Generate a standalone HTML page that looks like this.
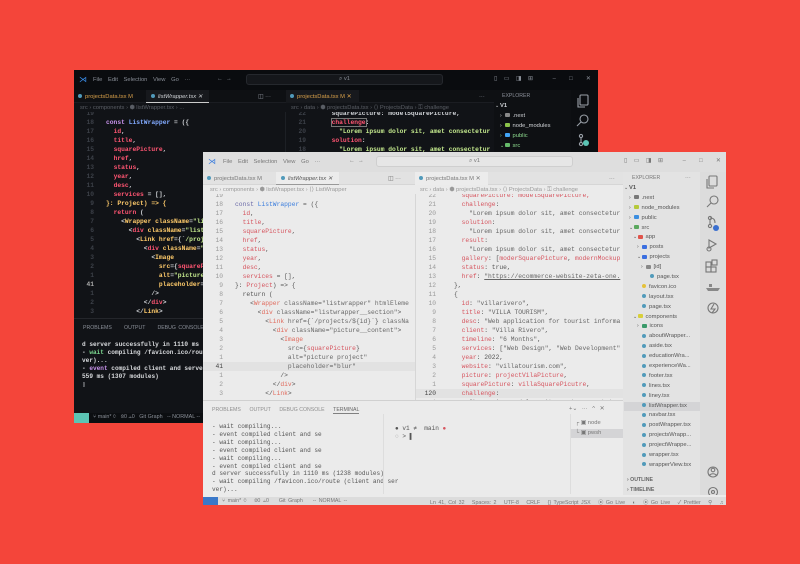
<!DOCTYPE html>
<html><head><meta charset="utf-8"><style>
*{box-sizing:border-box;margin:0;padding:0}
body{width:800px;height:564px;background:#f4453a;position:relative;overflow:hidden;font-family:"Liberation Sans",sans-serif}
.win{position:absolute;width:524px;height:353px;overflow:hidden}
.win>div{position:absolute}
pre{font-family:"Liberation Mono",monospace;font-size:6.3px;line-height:9px;white-space:pre;position:absolute}
.ui{font-size:5.8px;white-space:nowrap}
.t{position:absolute;white-space:nowrap}
.light{background:#ebebeb;color:#555}
.light .title{background:#dedede}
.light .tabs{background:#e2e2e2;border-bottom:1px solid #d6d6d6}
.light .atab{background:#ececec}
.light .side{background:#e3e3e3}
.light .act{background:#dcdcdc}
.light .panel{background:#ebebeb;border-top:1px solid #d0d0d0}
.light .status{background:#dcdcdc;color:#666}
.light .srch{background:#e6e6e6;border:1px solid #cfcfcf}
.light .ln{color:#9a9a9a}
.light .k{color:#6b6aa8}.light .f{color:#3b7ddd}.light .p{color:#d6555f}.light .s{color:#666}.light .tg{color:#e06a5c}.light .a{color:#6a6a6a}.light .y{color:#d6555f}.light .o{color:#555}
.light .sel{background:#d4d4d6}
.light .cur{background:#e2e2e2}
.light .rem{background:#3a78c9}
.light .dim{color:#777}
.light .ico{stroke:#777}
.dark{background:#111317;color:#cfd2d6}
.dark .title{background:#0a0c0f}
.dark .tabs{background:#0e1013;border-bottom:1px solid #1b1d22}
.dark .atab{background:#17191d}
.dark .side{background:#0e1013}
.dark .act{background:#0c0e11}
.dark .panel{background:#111317;border-top:1px solid #24262b}
.dark .status{background:#0c0e11;color:#8a8f98}
.dark .srch{background:#15171b;border:1px solid #25282d}
.dark .ln{color:#3c4048}
.dark .k{color:#c792ea}.dark .f{color:#82aaff}.dark .p{color:#ff5572}.dark .s{color:#c3e88d}.dark .tg{color:#ff5572}.dark .a{color:#ffcb6b}.dark .y{color:#ffcb6b}.dark .o{color:#cfd2d6}
.dark .sel{background:#1e2228}
.dark .cur{background:#16181c}
.dark .rem{background:#5cc4b4}
.dark .dim{color:#8a8f98}
.dark .ico{stroke:#9aa0a8}
.dark pre{font-weight:bold}
.exp div{height:9.9px;line-height:9.9px;font-size:5.8px;white-space:nowrap;position:relative}
.ic{display:inline-block;width:4.5px;height:4px;border-radius:1px;margin-right:3px;vertical-align:middle}
.fi{display:inline-block;width:4px;height:4px;border-radius:50%;background:#519aba;margin-right:3px;vertical-align:middle}
.ch{display:inline-block;width:5px;font-size:5px}
</style></head><body>

<!-- DARK WINDOW -->
<div class="win dark" style="left:74px;top:70px">
 <div class="title" style="left:0;top:0;width:524px;height:20px"></div>
 <div class="t ui" style="left:5px;top:5px;color:#3b8eea;font-size:8px">⋊</div>
 <div class="t ui dim" style="left:19px;top:7px;word-spacing:4px">File Edit Selection View Go ···</div>
 <div class="t ui dim" style="left:143px;top:6px">←&nbsp;&nbsp;→</div>
 <div class="srch" style="left:172px;top:4px;width:197px;height:11px;border-radius:3px"></div>
 <div class="t ui dim" style="left:265px;top:6px">⌕ v1</div>
 <div class="t ui dim" style="left:420px;top:6px;word-spacing:5px">▯ ▭ ◨ ⊞ &nbsp; – &nbsp;□ &nbsp;✕</div>
 <div class="tabs" style="left:0;top:20px;width:420px;height:13px"></div>
 <div class="t ui" style="left:4px;top:24px;color:#d8a04a"><span class="fi"></span>projectsData.tsx M</div>
 <div class="atab" style="left:72px;top:20px;width:63px;height:13px;border-bottom:1px solid #ccc"></div>
 <div class="t ui" style="left:77px;top:24px;font-style:italic"><span class="fi"></span>listWrapper.tsx ✕</div>
 <div class="t ui dim" style="left:184px;top:24px">◫ ···</div>
 <div class="atab" style="left:212px;top:20px;width:73px;height:13px"></div>
 <div class="t ui" style="left:216px;top:24px;color:#d8a04a"><span class="fi"></span>projectsData.tsx M ✕</div>
 <div class="t ui dim" style="left:405px;top:24px">···</div>
 <div class="t ui dim" style="left:6px;top:35px;opacity:.6">src › components › ⬢ listWrapper.tsx › ...</div>
 <div class="t ui dim" style="left:217px;top:35px;opacity:.6">src › data › ⬢ projectsData.tsx › ⟨⟩ ProjectsData › ⚿ challenge</div>
 <div style="left:0;top:42px;width:211px;height:206px;overflow:hidden">
  <pre class="ln" style="left:0;top:-3px;width:20px;text-align:right">19
18
17
16
15
14
13
12
11
10
9
8
7
6
5
4
3
2
1
<span style="color:#aaa">41</span>
1
2
3</pre>
  <pre style="left:32px;top:-3px"> 
<span class="k">const</span> <span class="f">ListWrapper</span> <span class="o">= ({</span>
  <span class="p">id</span>,
  <span class="p">title</span>,
  <span class="p">squarePicture</span>,
  <span class="p">href</span>,
  <span class="p">status</span>,
  <span class="p">year</span>,
  <span class="p">desc</span>,
  <span class="p">services</span> = [],
<span class="y">}: Project) =&gt; {</span>
  <span class="p">return</span> (
    &lt;<span class="y">Wrapper</span> <span class="a">className</span>=<span class="s">"listwrapper"</span> <span class="a">htmlEleme</span>
      &lt;<span class="tg">div</span> <span class="a">className</span>=<span class="s">"listwrapper__section"</span>&gt;
        &lt;<span class="y">Link</span> <span class="a">href</span>={`<span class="s">/projects/${id}</span>`} <span class="a">classNa</span>
          &lt;<span class="tg">div</span> <span class="a">className</span>=<span class="s">"picture__content"</span>&gt;
            &lt;<span class="y">Image</span>
              <span class="a">src</span>={<span class="p">squarePicture</span>}
              <span class="a">alt</span>=<span class="s">"picture project"</span>
              <span class="a">placeholder</span>=<span class="s">"blur"</span>
            /&gt;
          &lt;/<span class="tg">div</span>&gt;
        &lt;/<span class="y">Link</span>&gt;</pre>
 </div>
 <div style="left:211px;top:42px;width:209px;height:206px;overflow:hidden;border-left:1px solid #1d2025">
  <pre class="ln" style="left:0;top:-3px;width:20px;text-align:right">22
21
20
19
18</pre>
  <pre style="left:38px;top:-3px">  <span class="o">squarePicture: modelSquarePicture,</span>
  <span class="p" style="outline:1px solid #777">challenge</span>:
    <span class="s">"Lorem ipsum dolor sit, amet consectetur</span>
  <span class="p">solution</span>:
    <span class="s">"Lorem ipsum dolor sit, amet consectetur</span></pre>
 </div>
 <div class="side" style="left:420px;top:20px;width:77px;height:322px"></div>
 <div class="t ui dim" style="left:428px;top:23px;font-size:5.2px">EXPLORER</div>
 <div class="exp" style="left:421px;top:32px;width:76px">
  <div><span class="ch">⌄</span><b>V1</b></div>
  <div style="padding-left:5px"><span class="ch">›</span><span class="ic" style="background:#888"></span>.next</div>
  <div style="padding-left:5px"><span class="ch">›</span><span class="ic" style="background:#8bc34a"></span>node_modules</div>
  <div style="padding-left:5px;color:#8ddc8f"><span class="ch">›</span><span class="ic" style="background:#42a5f5"></span>public</div>
  <div style="padding-left:5px;color:#8ddc8f"><span class="ch">⌄</span><span class="ic" style="background:#66bb6a"></span>src</div>
 </div>
 <div class="act" style="left:497px;top:20px;width:27px;height:322px"></div>
 <svg style="position:absolute;left:497px;top:20px" width="27" height="80" fill="none" stroke-width="1.1" class="ico"><rect x="9" y="5" width="8" height="10" rx="1"/><path d="M7 8v9h7"/><circle cx="13" cy="29" r="4"/><path d="M10 32l-4 4"/><circle cx="10" cy="46" r="1.6"/><circle cx="10" cy="54" r="1.6"/><path d="M10 48v4"/><circle cx="15" cy="53" r="3" fill="#5cc4b4" stroke="none"/></svg>
 <div class="panel" style="left:0;top:248px;width:420px;height:95px"></div>
 <div class="t ui dim" style="left:9px;top:255px;font-size:5.2px;word-spacing:1px">PROBLEMS &nbsp;&nbsp;&nbsp; OUTPUT &nbsp;&nbsp;&nbsp; DEBUG CONSOLE &nbsp;&nbsp;&nbsp; <span style="color:#ddd">TERMINAL</span></div>
 <pre style="left:8px;top:271px;line-height:7.9px;font-size:6.1px;color:#d8dadd">d server successfully in 1110 ms (1238 modules)
- <span style="color:#7bd88f">wait</span> compiling /favicon.ico/route (client and ser
ver)...
- <span style="color:#c792ea">event</span> compiled client and server successfully in
559 ms (1307 modules)
▯</pre>
 <div class="status" style="left:0;top:343px;width:524px;height:10px"></div>
 <div class="rem" style="left:0;top:343px;width:15px;height:10px"></div>
 <div class="t ui dim" style="left:19px;top:344px;font-size:5.4px">⑂ main* ⟳ &nbsp; ⊗0 ⚠0 &nbsp; Git Graph &nbsp; -- NORMAL --</div>
</div>

<!-- LIGHT WINDOW -->
<div class="win light" style="left:203px;top:152px;width:523px">
 <div class="title" style="left:0;top:0;width:524px;height:20px"></div>
 <div class="t ui" style="left:5px;top:5px;color:#3b7ddd;font-size:8px">⋊</div>
 <div class="t ui dim" style="left:20px;top:7px;word-spacing:4px">File Edit Selection View Go ···</div>
 <div class="t ui dim" style="left:146px;top:6px">←&nbsp;&nbsp;→</div>
 <div class="srch" style="left:173px;top:4px;width:197px;height:11px;border-radius:3px"></div>
 <div class="t ui dim" style="left:266px;top:6px">⌕ v1</div>
 <div class="t ui dim" style="left:421px;top:6px;word-spacing:5px">▯ ▭ ◨ ⊞ &nbsp; – &nbsp;□ &nbsp;✕</div>
 <div class="tabs" style="left:0;top:20px;width:420px;height:13px"></div>
 <div class="t ui dim" style="left:4px;top:24px"><span class="fi"></span>projectsData.tsx M</div>
 <div class="atab" style="left:73px;top:20px;width:63px;height:13px;border-bottom:1px solid #999"></div>
 <div class="t ui" style="left:78px;top:24px;font-style:italic"><span class="fi"></span>listWrapper.tsx ✕</div>
 <div class="t ui dim" style="left:185px;top:24px">◫ ···</div>
 <div class="atab" style="left:212px;top:20px;width:73px;height:13px"></div>
 <div class="t ui dim" style="left:216px;top:24px"><span class="fi"></span>projectsData.tsx M ✕</div>
 <div class="t ui dim" style="left:406px;top:24px">···</div>
 <div class="t ui dim" style="left:7px;top:35px;opacity:.7">src › components › ⬢ listWrapper.tsx › ⟨⟩ ListWrapper</div>
 <div class="t ui dim" style="left:217px;top:35px;opacity:.7">src › data › ⬢ projectsData.tsx › ⟨⟩ ProjectsData › ⚿ challenge</div>
 <div style="left:0;top:42px;width:212px;height:206px;overflow:hidden">
  <div class="cur" style="position:absolute;left:0;top:168px;width:212px;height:9px"></div>
  <pre class="ln" style="left:0;top:-3px;width:20px;text-align:right">19
18
17
16
15
14
13
12
11
10
9
8
7
6
5
4
3
2
1
<span style="color:#444">41</span>
1
2
3</pre>
  <pre style="left:32px;top:-3px"> 
<span class="k">const</span> <span class="f">ListWrapper</span> <span class="o">= ({</span>
  <span class="p">id</span>,
  <span class="p">title</span>,
  <span class="p">squarePicture</span>,
  <span class="p">href</span>,
  <span class="p">status</span>,
  <span class="p">year</span>,
  <span class="p">desc</span>,
  <span class="p">services</span> = [],
}: <span class="y">Project</span>) =&gt; {
  <span class="o">return</span> (
    &lt;<span class="tg">Wrapper</span> <span class="a">className</span>=<span class="s">"listwrapper"</span> <span class="a">htmlEleme</span>
      &lt;<span class="tg">div</span> <span class="a">className</span>=<span class="s">"listwrapper__section"</span>&gt;
        &lt;<span class="tg">Link</span> <span class="a">href</span>={`<span class="s">/projects/${id}</span>`} <span class="a">classNa</span>
          &lt;<span class="tg">div</span> <span class="a">className</span>=<span class="s">"picture__content"</span>&gt;
            &lt;<span class="tg">Image</span>
              <span class="a">src</span>={<span class="p">squarePicture</span>}
              <span class="a">alt</span>=<span class="s">"picture project"</span>
              <span class="a">placeholder</span>=<span class="s">"blur"</span>
            /&gt;
          &lt;/<span class="tg">div</span>&gt;
        &lt;/<span class="tg">Link</span>&gt;</pre>
 </div>
 <div style="left:212px;top:42px;width:208px;height:206px;overflow:hidden;border-left:1px solid #d6d6d6">
  <div class="cur" style="position:absolute;left:0;top:195px;width:208px;height:9px"></div>
  <pre class="ln" style="left:0;top:-3px;width:20px;text-align:right">22
21
20
19
18
17
16
15
14
13
12
11
10
9
8
7
6
5
4
3
2
1
<span style="color:#444">120</span>
1</pre>
  <pre style="left:38px;top:-3px">  <span class="p">squarePicture: modelSquarePicture,</span>
  <span class="p">challenge</span>:
    <span class="s">"Lorem ipsum dolor sit, amet consectetur</span>
  <span class="p">solution</span>:
    <span class="s">"Lorem ipsum dolor sit, amet consectetur</span>
  <span class="p">result</span>:
    <span class="s">"Lorem ipsum dolor sit, amet consectetur</span>
  <span class="p">gallery</span>: [<span class="p">moderSquarePicture</span>, <span class="p">modernMockup</span>
  <span class="p">status</span>: true,
  <span class="p">href</span>: <span class="s" style="text-decoration:underline">"https://ecommerce-website-zeta-one.</span>
},
{
  <span class="p">id</span>: <span class="s">"villarivero"</span>,
  <span class="p">title</span>: <span class="s">"VILLA TOURISM"</span>,
  <span class="p">desc</span>: <span class="s">"Web application for tourist informa</span>
  <span class="p">client</span>: <span class="s">"Villa Rivero"</span>,
  <span class="p">timeline</span>: <span class="s">"6 Months"</span>,
  <span class="p">services</span>: [<span class="s">"Web Design"</span>, <span class="s">"Web Development"</span>
  <span class="p">year</span>: 2022,
  <span class="p">website</span>: <span class="s">"villatourism.com"</span>,
  <span class="p">picture</span>: <span class="p">projectVilaPicture</span>,
  <span class="p">squarePicture</span>: <span class="p">villaSquarePicutre</span>,
  <span class="p">challenge</span>:
    <span class="s">"Lorem ipsum dolor sit, amet consectetur</span></pre>
 </div>
 <div class="side" style="left:420px;top:20px;width:77px;height:323px"></div>
 <div class="t ui dim" style="left:429px;top:23px;font-size:5.2px">EXPLORER</div>
 <div class="t ui dim" style="left:482px;top:23px">···</div>
 <div class="exp" style="left:421px;top:32px;width:76px">
  <div><span class="ch">⌄</span><b>V1</b></div>
  <div style="padding-left:5px"><span class="ch">›</span><span class="ic" style="background:#777"></span>.next</div>
  <div style="padding-left:5px"><span class="ch">›</span><span class="ic" style="background:#b5c93a"></span>node_modules</div>
  <div style="padding-left:5px"><span class="ch">›</span><span class="ic" style="background:#3b8ee0"></span>public</div>
  <div style="padding-left:5px"><span class="ch">⌄</span><span class="ic" style="background:#5aa85e"></span>src</div>
  <div style="padding-left:9px"><span class="ch">⌄</span><span class="ic" style="background:#e0534a"></span>app</div>
  <div style="padding-left:13px"><span class="ch">›</span><span class="ic" style="background:#3b6fe0"></span>posts</div>
  <div style="padding-left:13px"><span class="ch">⌄</span><span class="ic" style="background:#3b6fe0"></span>projects</div>
  <div style="padding-left:17px"><span class="ch">›</span><span class="ic" style="background:#888"></span>[id]</div>
  <div style="padding-left:26px"><span class="fi"></span>page.tsx</div>
  <div style="padding-left:18px"><span class="fi" style="background:#e5c13a"></span>favicon.ico</div>
  <div style="padding-left:18px"><span class="fi"></span>layout.tsx</div>
  <div style="padding-left:18px"><span class="fi"></span>page.tsx</div>
  <div style="padding-left:9px"><span class="ch">⌄</span><span class="ic" style="background:#d8cf3a"></span>components</div>
  <div style="padding-left:13px"><span class="ch">›</span><span class="ic" style="background:#3a9a6a"></span>icons</div>
  <div style="padding-left:18px"><span class="fi"></span>aboutWrapper...</div>
  <div style="padding-left:18px"><span class="fi"></span>aside.tsx</div>
  <div style="padding-left:18px"><span class="fi"></span>educationWra...</div>
  <div style="padding-left:18px"><span class="fi"></span>experienceWa...</div>
  <div style="padding-left:18px"><span class="fi"></span>footer.tsx</div>
  <div style="padding-left:18px"><span class="fi"></span>lines.tsx</div>
  <div style="padding-left:18px"><span class="fi"></span>liney.tsx</div>
  <div class="sel" style="padding-left:18px"><span class="fi"></span>listWrapper.tsx</div>
  <div style="padding-left:18px"><span class="fi"></span>navbar.tsx</div>
  <div style="padding-left:18px"><span class="fi"></span>postWrapper.tsx</div>
  <div style="padding-left:18px"><span class="fi"></span>projectsWrapp...</div>
  <div style="padding-left:18px"><span class="fi"></span>projectWrappe...</div>
  <div style="padding-left:18px"><span class="fi"></span>wrapper.tsx</div>
  <div style="padding-left:18px"><span class="fi"></span>wrapperView.tsx</div>
 </div>
 <div class="t ui" style="left:424px;top:325px;font-size:5.2px;font-weight:bold;color:#666">› OUTLINE</div>
 <div class="t ui" style="left:424px;top:335px;font-size:5.2px;font-weight:bold;color:#666">› TIMELINE</div>
 <div class="act" style="left:497px;top:20px;width:27px;height:323px"></div>
 <svg style="position:absolute;left:497px;top:20px" width="27" height="323" fill="none" stroke-width="1.1" class="ico"><rect x="9" y="4" width="8" height="10" rx="1"/><path d="M7 7v9h7"/><circle cx="14" cy="28" r="4"/><path d="M11 31l-4 4"/><circle cx="10" cy="46" r="1.6"/><circle cx="10" cy="54" r="1.6"/><path d="M10 48v4M10 46c4 0 5 2 5 5"/><circle cx="16" cy="56" r="3" fill="#3a6fcf" stroke="none"/><path d="M9 68l7 4-7 4z"/><circle cx="9" cy="77" r="2"/><rect x="6" y="90" width="5" height="5"/><rect x="11" y="95" width="5" height="5"/><rect x="6" y="95" width="5" height="5"/><rect x="12" y="88" width="5" height="5"/><path d="M6 116h14l-2 3h-10z" fill="#888" stroke="none"/><rect x="9" y="112" width="3" height="3" fill="#888" stroke="none"/><circle cx="13" cy="136" r="5"/><path d="M14 132l-3 5h4l-3 4"/><circle cx="13" cy="300" r="5"/><circle cx="13" cy="298" r="1.8"/><path d="M9 304c2-3 6-3 8 0"/><circle cx="13" cy="320" r="4.5"/><circle cx="13" cy="320" r="1.5"/></svg>
 <div class="panel" style="left:0;top:248px;width:420px;height:95px"></div>
 <div class="t ui dim" style="left:9px;top:255px;font-size:5.2px;opacity:.8">PROBLEMS &nbsp;&nbsp;&nbsp;&nbsp; OUTPUT &nbsp;&nbsp;&nbsp;&nbsp; DEBUG CONSOLE &nbsp;&nbsp;&nbsp;&nbsp; <span style="color:#444;border-bottom:1px solid #666">TERMINAL</span></div>
 <div class="t ui dim" style="left:366px;top:254px;word-spacing:3px">+⌄ ··· ^ ✕</div>
 <pre style="left:9px;top:271px;line-height:7.9px;font-size:6.1px;color:#555">- wait compiling...
- event compiled client and se
- wait compiling...
- event compiled client and se
- wait compiling...
- event compiled client and se
d server successfully in 1110 ms (1238 modules)
- wait compiling /favicon.ico/route (client and ser
ver)...</pre>
 <div style="left:180px;top:262px;width:1px;height:80px;background:#ddd"></div>
 <pre style="left:192px;top:273px;line-height:8px;font-size:6.1px;color:#555">● v1 ≠  main <span style="color:#d6555f">●</span>
<span style="color:#aaa">○</span> &gt; ▌</pre>
 <div style="left:367px;top:262px;width:53px;height:80px;border-left:1px solid #ddd"></div>
 <div class="sel" style="left:368px;top:277px;width:52px;height:9px"></div>
 <div class="t ui dim" style="left:372px;top:268px">┌ ▣ node</div>
 <div class="t ui dim" style="left:372px;top:278px">└ ▣ pwsh</div>
 <div class="status" style="left:0;top:345px;width:524px;height:9px"></div>
 <div class="rem" style="left:0;top:345px;width:15px;height:9px"></div>
 <div class="t ui dim" style="left:19px;top:346px;font-size:5.3px;word-spacing:1px">⑂ main* ⟳ &nbsp; ⊗0 ⚠0 &nbsp;&nbsp; Git Graph &nbsp;&nbsp; -- NORMAL --</div>
 <div class="t ui dim" style="left:227px;top:346px;font-size:5.3px;word-spacing:1px">Ln 41, Col 32 &nbsp; Spaces: 2 &nbsp; UTF-8 &nbsp; CRLF &nbsp; {} TypeScript JSX &nbsp; ⦿ Go Live &nbsp; ◐ &nbsp; ⦿ Go Live &nbsp; ✓ Prettier &nbsp; ⚲ &nbsp; ♫</div>
</div>
</body></html>
